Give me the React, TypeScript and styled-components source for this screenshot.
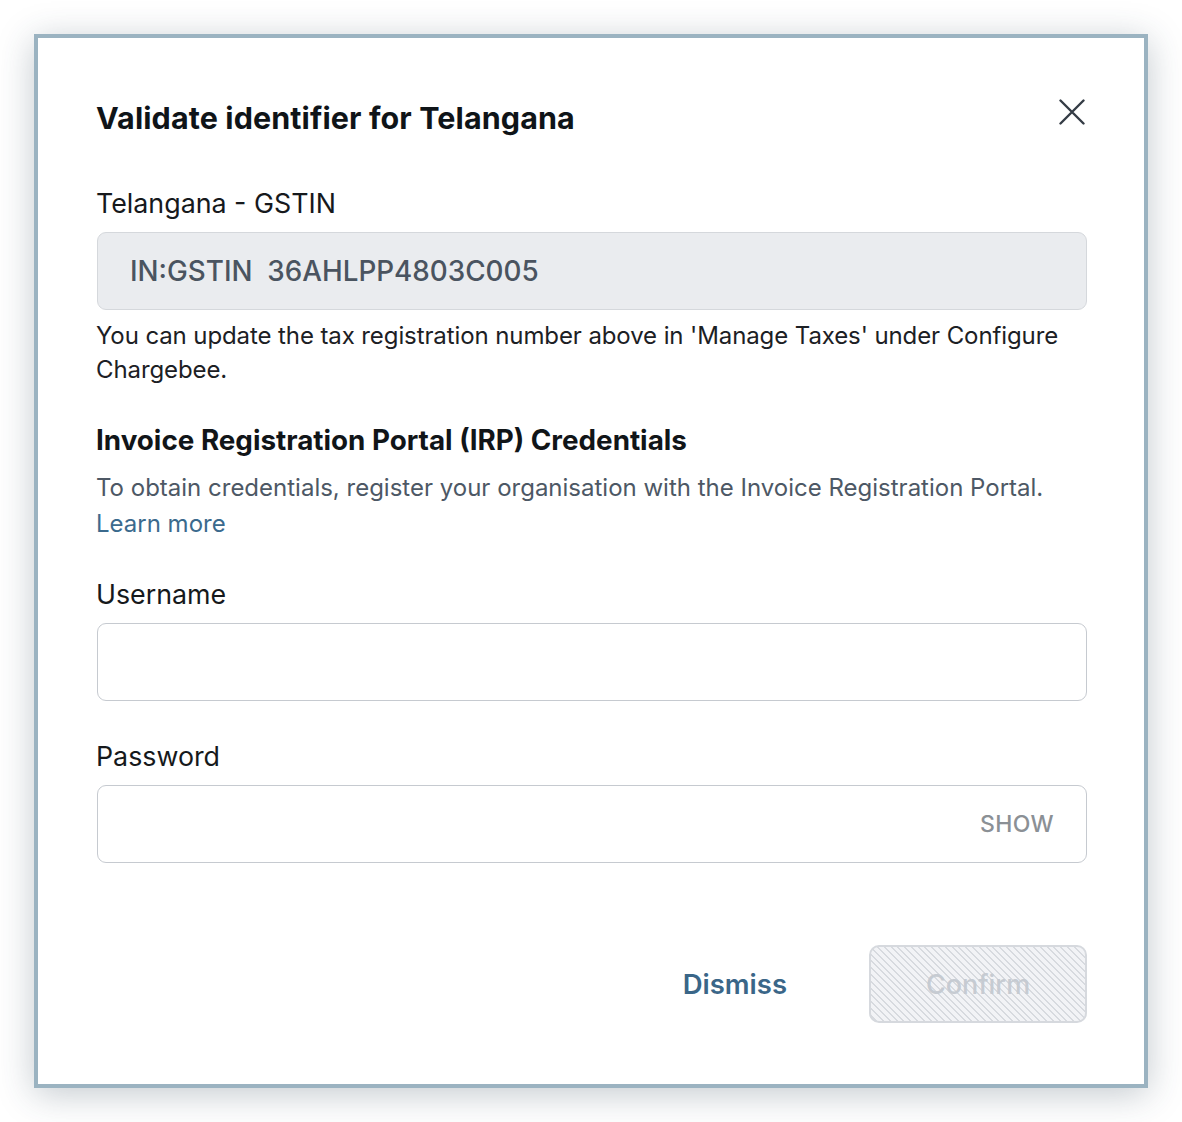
import React, { useState } from 'react';
import styled, { createGlobalStyle } from 'styled-components';

const GlobalStyle = createGlobalStyle`
  body {
    margin: 0;
    background: #ffffff;
    font-family: Inter, "Noto Sans", "Liberation Sans", sans-serif;
    -webkit-font-smoothing: antialiased;
  }
`;

const Page = styled.div`
  padding: 34px;
`;

const Dialog = styled.div`
  box-sizing: border-box;
  width: 1114px;
  height: 1054px;
  border: 4px solid #9bb3c1;
  background: #ffffff;
  box-shadow: 0 6px 34px rgba(40, 60, 80, 0.28);
  padding: 62px 57px 0 58px;
  display: flex;
  flex-direction: column;
`;

const Header = styled.div`
  display: flex;
  justify-content: space-between;
  align-items: flex-start;
`;

const Title = styled.h2`
  margin: 0;
  font-size: 30.5px;
  line-height: 36px;
  font-weight: 700;
  letter-spacing: 0.1px;
  color: #0f1418;
`;

const CloseButton = styled.button`
  border: 0;
  background: none;
  padding: 0;
  margin: -2px 1px 0 0;
  width: 28px;
  height: 28px;
  cursor: pointer;
  display: flex;
  align-items: center;
  justify-content: center;
`;

const Label = styled.div<{ $gap?: number }>`
  font-size: 26.8px;
  line-height: 34px;
  color: #16191c;
  margin-top: ${({ $gap }) => $gap ?? 0}px;
`;

const ReadonlyBox = styled.div`
  box-sizing: border-box;
  height: 78px;
  margin: 12px 0 0 1px;
  border: 1.5px solid #d5d8dc;
  border-radius: 9px;
  background: #eaecef;
  display: flex;
  align-items: center;
  padding-left: 32px;
  font-size: 27.8px;
  font-weight: 500;
  color: #4a5460;
  white-space: pre;
`;

const Help = styled.p`
  margin: 9px 0 0;
  font-size: 24px;
  line-height: 34px;
  letter-spacing: -0.1px;
  color: #1c2024;
`;

const SectionTitle = styled.h3`
  margin: 36px 0 0;
  font-size: 27.8px;
  line-height: 34px;
  font-weight: 700;
  color: #111518;
`;

const Description = styled.p`
  margin: 13px 0 0;
  font-size: 24px;
  line-height: 36px;
  color: #4d5865;
`;

const Link = styled.a`
  color: #3b6a8d;
  text-decoration: none;
  cursor: pointer;
`;

const Field = styled.div`
  position: relative;
  margin: 12px 0 0 1px;
`;

const Input = styled.input`
  box-sizing: border-box;
  width: 100%;
  height: 78px;
  border: 1.5px solid #c6cad0;
  border-radius: 9px;
  background: #fff;
  padding: 0 120px 0 24px;
  font-family: inherit;
  font-size: 24px;
  color: #1c2024;
  outline: none;
`;

const ShowToggle = styled.button`
  position: absolute;
  right: 33px;
  top: 50%;
  transform: translateY(-50%);
  border: 0;
  background: none;
  padding: 0;
  font-family: inherit;
  font-size: 23px;
  font-weight: 500;
  letter-spacing: 0.4px;
  color: #8b9095;
  cursor: pointer;
`;

const Actions = styled.div`
  margin-top: 82px;
  display: flex;
  justify-content: flex-end;
  align-items: center;
  gap: 82px;
`;

const TextButton = styled.button`
  border: 0;
  background: none;
  padding: 0;
  font-family: inherit;
  font-size: 27.5px;
  font-weight: 600;
  color: #3a6688;
  cursor: pointer;
`;

const DisabledButton = styled.button`
  box-sizing: border-box;
  width: 218px;
  height: 78px;
  border: 2px solid #d6d9de;
  border-radius: 10px;
  background-color: #f2f3f6;
  background-image: repeating-linear-gradient(
    45deg,
    #f2f3f6 0px,
    #f2f3f6 3.4px,
    #d7dadf 3.4px,
    #d7dadf 4.8px
  );
  font-family: inherit;
  font-size: 27px;
  font-weight: 500;
  color: #c6cbd2;
  cursor: not-allowed;
`;

const CloseIcon = () => (
  <svg width="26" height="26" viewBox="0 0 26 26" fill="none">
    <path d="M1.5 1.5 L24.5 24.5 M24.5 1.5 L1.5 24.5" stroke="#343c45" strokeWidth="2.4" strokeLinecap="round" />
  </svg>
);

const App = () => {
  const [showPassword, setShowPassword] = useState(false);

  return (
    <Page>
      <GlobalStyle />
      <Dialog>
        <Header>
          <Title>Validate identifier for Telangana</Title>
          <CloseButton aria-label="Close">
            <CloseIcon />
          </CloseButton>
        </Header>

        <Label $gap={50}>Telangana - GSTIN</Label>
        <ReadonlyBox>{'IN:GSTIN  36AHLPP4803C005'}</ReadonlyBox>
        <Help>
          You can update the tax registration number above in 'Manage Taxes' under Configure Chargebee.
        </Help>

        <SectionTitle>Invoice Registration Portal (IRP) Credentials</SectionTitle>
        <Description>
          To obtain credentials, register your organisation with the Invoice Registration Portal.
          <br />
          <Link>Learn more</Link>
        </Description>

        <Label $gap={35}>Username</Label>
        <Field>
          <Input type="text" />
        </Field>

        <Label $gap={38}>Password</Label>
        <Field>
          <Input type={showPassword ? 'text' : 'password'} />
          <ShowToggle onClick={() => setShowPassword(!showPassword)}>
            {showPassword ? 'HIDE' : 'SHOW'}
          </ShowToggle>
        </Field>

        <Actions>
          <TextButton>Dismiss</TextButton>
          <DisabledButton disabled>Confirm</DisabledButton>
        </Actions>
      </Dialog>
    </Page>
  );
};

export default App;
